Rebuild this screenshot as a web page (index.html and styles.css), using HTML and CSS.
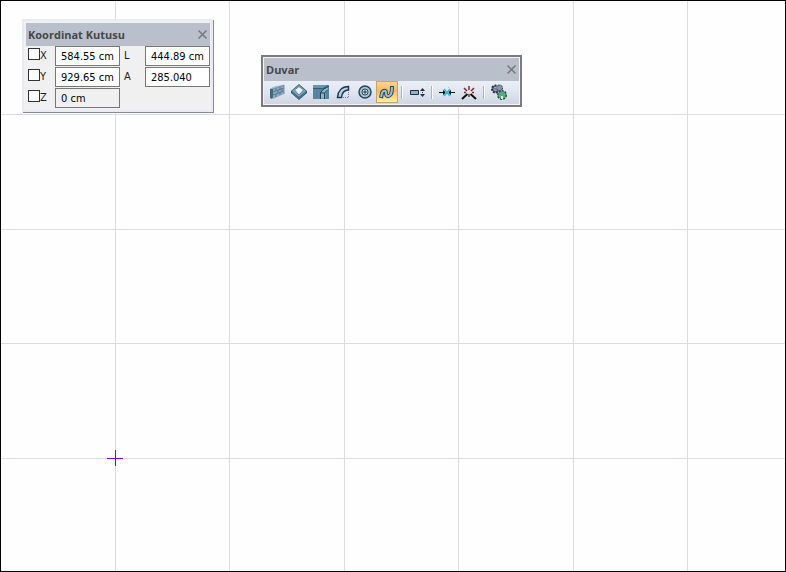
FILE: index.html
```html
<!DOCTYPE html>
<html lang="tr">
<head>
<meta charset="utf-8">
<title>Duvar</title>
<link rel="stylesheet" href="styles.css">
</head>
<body>
<main class="canvas">
  <svg class="grid" aria-hidden="true" shape-rendering="crispEdges">
    <path class="grid-line" d="M114.5 0V4000M228.5 0V4000M343.5 0V4000M457.5 0V4000M572.5 0V4000M686.5 0V4000M0 113.5H4000M0 228.5H4000M0 342.5H4000M0 457.5H4000"/>
    <path class="cursor" d="M106 457.5H122M114.5 449V465"/>
  </svg>

  <section class="window coords" aria-label="Koordinat Kutusu">
    <header class="titlebar">
      <h2>Koordinat Kutusu</h2>
      <button class="close" type="button" aria-label="Kapat"><svg width="9" height="9" viewBox="0 0 9 9"><path d="M.5 .5L8.500 8.500M8.500 .5L.5 8.500"/></svg></button>
    </header>
    <form class="fields">
      <label class="lock"><input type="checkbox">X</label>
      <input class="value" type="text" value="584.55 cm" aria-label="X">
      <label class="name" for="l">L</label>
      <input class="value" id="l" type="text" value="444.89 cm">
      <label class="lock"><input type="checkbox">Y</label>
      <input class="value" type="text" value="929.65 cm" aria-label="Y">
      <label class="name" for="a">A</label>
      <input class="value" id="a" type="text" value="285.040">
      <label class="lock"><input type="checkbox">Z</label>
      <input class="value" type="text" value="0 cm" aria-label="Z" readonly>
    </form>
  </section>

  <section class="window wall" aria-label="Duvar">
    <header class="titlebar">
      <h2>Duvar</h2>
      <button class="close" type="button" aria-label="Kapat"><svg width="9" height="9" viewBox="0 0 9 9"><path d="M.5 .5L8.500 8.500M8.500 .5L.5 8.500"/></svg></button>
    </header>
    <div class="toolbar" role="toolbar">
      <button class="tool" type="button" aria-label="Duvar"><svg width="16" height="16" viewBox="0 0 16 16">
        <path d="M1 5L5 3V12L3 15L1 14Z" fill="#42677f"/><path d="M1 5L6 2L15 1L12 4Z" fill="#a9c6d8"/><path d="M4 5L15 1V10L4 15Z" fill="#8dabc0"/>
        <path d="M4 8L15 4M4 11L15 7M7 4V7M11 3V5M9 6V9M13 5V8M7 10V13M11 8V11" stroke="#55788e" fill="none"/><path d="M4 5L15 1V10" stroke="#6e93a9" fill="none"/></svg></button>
      <button class="tool" type="button" aria-label="Dikdörtgen duvar"><svg width="16" height="16" viewBox="0 0 16 16">
        <path d="M0 7L8 0L16 7V9L8 16L0 9Z" fill="#355d77"/><path d="M1 7L8 1L15 7L8 13Z" fill="#78a4bd"/><path d="M3.500 6L8 2.500L12.500 6L8 11Z" fill="#edf4fa" stroke="#5c869e"/><path d="M1 8L8 14.500L15 8" fill="none" stroke="#507d97"/></svg></button>
      <button class="tool" type="button" aria-label="Köşe duvar"><svg width="16" height="16" viewBox="0 0 16 16">
        <path d="M0 1H16V15H0Z" fill="#55849e"/><path d="M0 1H16L12 5H0Z" fill="#6995ad"/><path d="M7.500 9L10 5.500L15 3V6L12.500 8.500V14.500H7.500Z" fill="#91b4c7"/><path d="M7.500 15V9L10 5.500L15.500 2.500M7.500 9H11.500V15M11.500 9L15 5.500" stroke="#233f50" fill="none"/><path d="M0 4.500H10L15 1.500" stroke="#365b71" fill="none"/></svg></button>
      <button class="tool" type="button" aria-label="Yay duvar"><svg width="16" height="16" viewBox="0 0 16 16">
        <path d="M2.500 13.500C3 7 7 2.500 13.500 2.500V6C9.500 6 7 9 6.500 13.500Z" fill="#b9d0df" stroke="#173a51" stroke-width="1.500"/><path d="M13.500 8V14M8 13.500H14" stroke="#6d808e" stroke-dasharray="1 1" fill="none"/></svg></button>
      <button class="tool" type="button" aria-label="Çember duvar"><svg width="16" height="16" viewBox="0 0 16 16">
        <circle cx="8" cy="8" r="6" fill="#a5c2d4" stroke="#24485e" stroke-width="1.500"/><circle cx="8" cy="8" r="3" fill="#e4edf5" stroke="#24485e"/><path d="M8 6V10M6 8H10" stroke="#17384d"/></svg></button>
      <button class="tool active" type="button" aria-label="Eğri duvar" aria-pressed="true"><svg width="16" height="16" viewBox="0 0 16 16">
        <path d="M2 14L3 9C4 6 7 6 7 9C7 13 10 13 12 10C13 8 13 6 13 2" fill="none" stroke="#284b60" stroke-width="4"/><path d="M2 13L3 9C4 6 7 6 7 9C7 13 10 13 12 10C13 8 13 6 13 3" fill="none" stroke="#9fbfd1" stroke-width="2"/></svg></button>
      <span class="sep"></span>
      <button class="tool" type="button" aria-label="Duvar kalınlığı"><svg width="16" height="16" viewBox="0 0 16 16">
        <path d="M1.500 6.500H9.500V10.500H1.500Z" fill="#8fb4c7" stroke="#173142"/><path d="M13.500 4L16 7H11ZM11 10H16L13.500 13ZM13 8H14V9H13Z" fill="#173142"/></svg></button>
      <span class="sep"></span>
      <button class="tool" type="button" aria-label="Duvar birleştir"><svg width="16" height="16" viewBox="0 0 16 16">
        <path d="M0 8.500H6M10 8.500H16" stroke="#111"/><path d="M4 6L7 8.500L4 11ZM12 6L9 8.500L12 11Z" fill="#111"/><path d="M5 5L11 12M11 5L5 12M6 8.500H10" stroke="#2cbbd5" stroke-width="1.500"/><path d="M9.500 3V4" stroke="#bbb"/></svg></button>
      <button class="tool" type="button" aria-label="Köşe birleştir"><svg width="16" height="16" viewBox="0 0 16 16">
        <path d="M1 15L6.500 10M15 15L9.500 10" stroke="#111" stroke-width="2"/><path d="M8 2V6M3 4L6 7M13 4L10 7M3 8.500H5M11 8.500H13M8 10V13" stroke="#8b2430" stroke-width="1.500"/></svg></button>
      <span class="sep"></span>
      <button class="tool" type="button" aria-label="Duvar ayarları"><svg width="16" height="16" viewBox="0 0 16 16">
        <circle cx="4.500" cy="5" r="3.500" fill="#66768d" stroke="#273345" stroke-width="2" stroke-dasharray="2 1"/><circle cx="8.500" cy="4" r="3" fill="#8895a8" stroke="#273345" stroke-dasharray="2 1"/><path d="M3 4L6 3M3 6H6" stroke="#a9b4c4"/>
        <circle cx="11" cy="11" r="4" fill="#4e9a77" stroke="#1d5138" stroke-width="2" stroke-dasharray="2 1"/><circle cx="11" cy="11" r="3.500" fill="#5aa984"/><path d="M10 12H12V15H10Z" fill="#d5eee2"/></svg></button>
    </div>
  </section>
</main>
</body>
</html>
```
FILE: styles.css
```css
* { box-sizing: border-box; }
body { margin: 0; font: 11px/16px "DejaVu Sans Condensed", "Noto Sans", sans-serif; color: #222; }
.canvas { position: relative; min-height: 100vh; border: 1px solid #000; background: #fefefe; overflow: hidden; }
.grid { position: absolute; inset: 0; width: 100%; height: 100%; }
.grid-line { stroke: #dcdce9; fill: none; }
.cursor { stroke: #7000f0; fill: none; }
.window { position: absolute; background: #f0f0f0; }
.coords { left: 21px; top: 18px; padding: 2px 1px 1px 2px; border: 2px solid #e6ebf4; box-shadow: 1px 1px 0 #888b94; }
.wall { left: 260px; top: 54px; width: 261px; padding: 1px; border: 2px solid #7c7c7c; background: #f0f3f8; }
.titlebar { display: flex; align-items: center; justify-content: space-between; height: 23px; padding: 0 2px; background: #b9c0cb; }
h2 { margin: 0; font: bold 11px/16px "Open Sans", sans-serif; color: #484848; }
button { padding: 0; border: 0; background: none; }
.close { display: flex; padding: 1px; }
.close path { stroke: #777; stroke-width: 1.5; fill: none; }
.fields { display: grid; grid-template-columns: 29px 65px 25px 65px; row-gap: 1px; padding-bottom: 1px; }
.lock { display: flex; align-items: center; padding-left: 2px; }
.lock input { appearance: none; width: 12px; height: 12px; margin: 0 0 4px; border: 1px solid #333; background: #fff; }
.lock input:checked { background: #555; }
.name { padding: 2px 4px; }
.value { width: 100%; height: 20px; padding: 0 5px; border: 1px solid #777; border-radius: 0; background: #fff; font: inherit; color: #000; }
.value:read-only { background: #f0f0f0; }
.toolbar { display: flex; align-items: center; height: 23px; padding: 0 0 1px 2px; background: linear-gradient(#eaeff7, #dfe5ef 50%, #cfd6e2); }
.tool { display: grid; place-items: center; width: 22px; height: 22px; }
.active { border: 1px solid #c6a368; background: linear-gradient(#fad49b, #f9b859 45%, #fff0a0); }
.sep { width: 2px; height: 13px; margin: 0 3px; border-left: 1px solid #b0b4bc; border-right: 1px solid #fff; }
```
